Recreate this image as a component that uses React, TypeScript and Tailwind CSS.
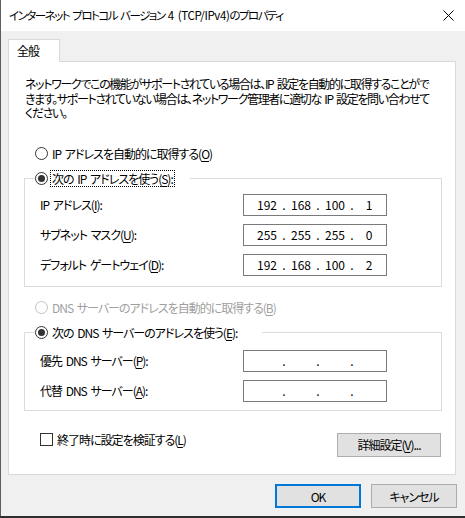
import { Fragment } from "react";

const FONT =
  "font-['Noto_Sans_CJK_JP',sans-serif] [font-feature-settings:'palt'] tracking-[-1px] [word-spacing:2px]";

function Radio({ checked, disabled }: { checked?: boolean; disabled?: boolean }) {
  return (
    <span
      className={`w-[13px] h-[13px] rounded-full border bg-white flex items-center justify-center shrink-0 ${
        disabled ? "border-[#c2c2c2]" : "border-[#333333]"
      }`}
    >
      {checked && <span className="w-[7px] h-[7px] rounded-full bg-[#333333]" />}
    </span>
  );
}

function IpBox({ parts }: { parts: string[] }) {
  return (
    <div className="w-[144px] h-[22px] border border-[#7a7a7a] bg-white flex items-center pl-[10px] shrink-0 tracking-normal">
      {parts.map((p, i) => (
        <Fragment key={i}>
          {i > 0 && <span className="w-[8px] text-center">.</span>}
          <span className="w-[26px] text-center">{p}</span>
        </Fragment>
      ))}
    </div>
  );
}

function Row({ label, parts }: { label: React.ReactNode; parts: string[] }) {
  return (
    <div className="flex items-center h-[22px]">
      <span className="w-[203px] shrink-0 whitespace-nowrap">{label}</span>
      <IpBox parts={parts} />
    </div>
  );
}

export default function App() {
  return (
    <div className="w-[465px] h-[518px] bg-[#2f2f2f]">
      <div className={`w-[465px] h-[516px] border-l border-[#5f5f5f] bg-[#f0f0f0] flex flex-col text-[12px] leading-[15px] text-black ${FONT}`}>
        {/* Title bar */}
        <div className="h-[31px] bg-white flex items-center pl-[8px] shrink-0">
          <span className="whitespace-nowrap text-[11.5px] tracking-[-1.5px]">
            インターネット プロトコル バージョン <span className="tracking-[-0.4px]">4 (TCP/IPv4)</span>のプロパティ
          </span>
          <svg className="ml-auto mr-[11px]" width="11" height="11" viewBox="0 0 11 11">
            <path d="M0.5 0.5 L10.5 10.5 M10.5 0.5 L0.5 10.5" stroke="#000" strokeWidth="1" fill="none" />
          </svg>
        </div>

        <div className="pl-[7px] pt-[8px] flex flex-col">
          {/* Tab */}
          <div className="w-[52px] h-[23px] -mb-px relative z-10 bg-white border border-b-0 border-[#d9d9d9] pl-[8px] pt-[3px]">
            全般
          </div>

          {/* Panel */}
          <div className="w-[448px] h-[414px] border border-[#d9d9d9] bg-white pl-[15px] pt-[15px] flex flex-col">
            <p className="pl-px whitespace-nowrap leading-[14.5px] tracking-[-1.35px]">
              ネットワークでこの機能がサポートされている場合は、IP 設定を自動的に取得することがで
              <br />
              きます。サポートされていない場合は、ネットワーク管理者に適切な IP 設定を問い合わせて
              <br />
              ください。
            </p>

            <div className="mt-[25px] h-[16px] flex items-center pl-[11px] gap-[4px]">
              <Radio />
              <span>
                IP アドレスを自動的に取得する(<u className="underline-offset-2">O</u>)
              </span>
            </div>

            <fieldset className="mt-[8px] w-[418px] border border-[#dcdcdc] pb-[10px]">
              <legend className="ml-[10px] w-[155px] h-[17px] flex items-center">
                <Radio checked />
                <span className="ml-[2px] border border-dotted border-black px-px h-[17px] flex items-center">
                  次の IP アドレスを使う(<u className="underline-offset-2">S</u>):
                </span>
              </legend>
              <div className="pl-[15px] pt-[7px] flex flex-col gap-[8px]">
                <Row label={<>IP アドレス(<u className="underline-offset-2">I</u>):</>} parts={["192", "168", "100", "1"]} />
                <Row label={<>サブネット マスク(<u className="underline-offset-2">U</u>):</>} parts={["255", "255", "255", "0"]} />
                <Row label={<>デフォルト ゲートウェイ(<u className="underline-offset-2">D</u>):</>} parts={["192", "168", "100", "2"]} />
              </div>
            </fieldset>

            <div className="mt-[13px] h-[16px] flex items-center pl-[11px] gap-[4px] text-[#a0a0a0]">
              <Radio disabled />
              <span>
                DNS サーバーのアドレスを自動的に取得する(<u className="underline-offset-2">B</u>)
              </span>
            </div>

            <fieldset className="mt-[9px] w-[418px] border border-[#dcdcdc] pb-[8px]">
              <legend className="ml-[10px] w-[227px] h-[16px] flex items-center gap-[4px]">
                <Radio checked />
                <span>
                  次の DNS サーバーのアドレスを使う(<u className="underline-offset-2">E</u>):
                </span>
              </legend>
              <div className="pl-[15px] pt-[9px] flex flex-col gap-[8px]">
                <Row label={<>優先 DNS サーバー(<u className="underline-offset-2">P</u>):</>} parts={["", "", "", ""]} />
                <Row label={<>代替 DNS サーバー(<u className="underline-offset-2">A</u>):</>} parts={["", "", "", ""]} />
              </div>
            </fieldset>

            <div className="mt-[21px] w-[417px] flex items-start justify-between">
              <div className="h-[16px] flex items-center pl-[16px] gap-[4px]">
                <span className="w-[13px] h-[13px] border border-[#333333] bg-white shrink-0" />
                <span>
                  終了時に設定を検証する(<u className="underline-offset-2">L</u>)
                </span>
              </div>
              <button className="mt-px w-[104px] h-[24px] bg-[#e1e1e1] border border-[#adadad] flex items-center justify-center">
                詳細設定(<u className="underline-offset-2">V</u>)...
              </button>
            </div>
          </div>

          {/* Dialog buttons */}
          <div className="mt-[9px] flex justify-end gap-[10px] pr-[8px]">
            <button className="w-[86px] h-[24px] bg-[#e1e1e1] border-2 border-[#0078d7] flex items-center justify-center">
              OK
            </button>
            <button className="w-[86px] h-[24px] bg-[#e1e1e1] border border-[#adadad] flex items-center justify-center">
              キャンセル
            </button>
          </div>
        </div>
      </div>
    </div>
  );
}
